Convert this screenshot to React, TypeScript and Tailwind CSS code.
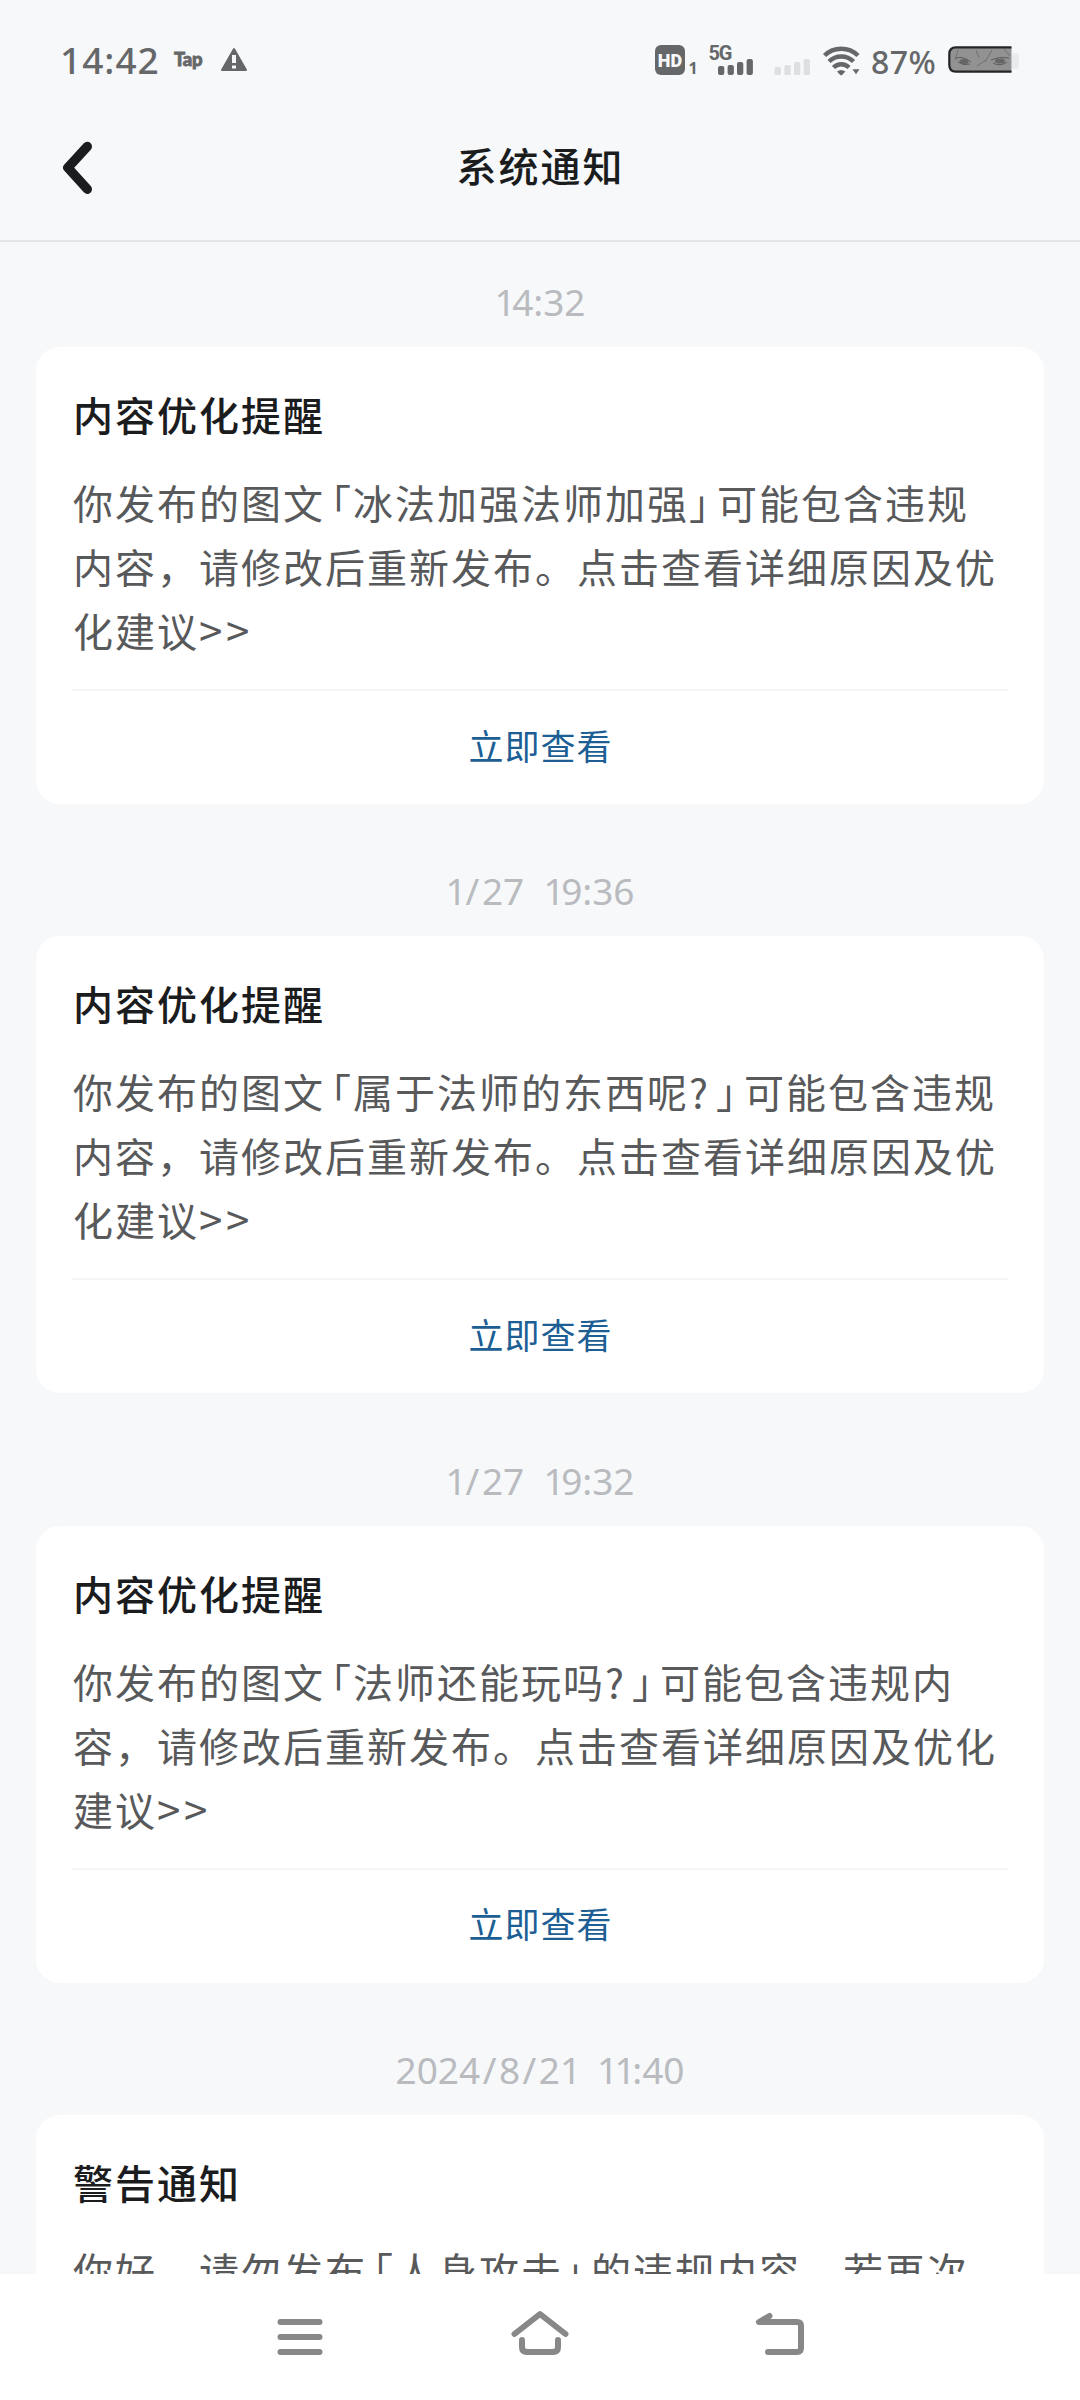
import type { ReactNode } from "react";

type Notice = {
  time: string;
  title: string;
  lines: string[];
  action?: string;
};

const notices: Notice[] = [
  {
    time: "14:32",
    title: "内容优化提醒",
    lines: [
      "你发布的图文「冰法加强法师加强」可能包含违规",
      "内容，请修改后重新发布。点击查看详细原因及优",
      "化建议>>",
    ],
    action: "立即查看",
  },
  {
    time: "1/27  19:36",
    title: "内容优化提醒",
    lines: [
      "你发布的图文「属于法师的东西呢?」可能包含违规",
      "内容，请修改后重新发布。点击查看详细原因及优",
      "化建议>>",
    ],
    action: "立即查看",
  },
  {
    time: "1/27  19:32",
    title: "内容优化提醒",
    lines: [
      "你发布的图文「法师还能玩吗?」可能包含违规内",
      "容，请修改后重新发布。点击查看详细原因及优化",
      "建议>>",
    ],
    action: "立即查看",
  },
  {
    time: "2024/8/21  11:40",
    title: "警告通知",
    lines: ["你好，请勿发布「人身攻击」的违规内容，若再次"],
  },
];

// Corner brackets and latin marks are set narrower than a full-width cell
const markClasses: Record<string, string> = {
  "「": "ml-[6px] [font-feature-settings:'halt']",
  "」": "mr-[6px] [font-feature-settings:'halt']",
  "?": "inline-block w-[27px]",
  ">": "inline-block w-[27px] text-[42px] leading-none",
};

function renderLine(line: string): ReactNode[] {
  return line.split(/([「」?>])/).map((part, i) =>
    markClasses[part] ? (
      <span key={i} className={markClasses[part]}>
        {part}
      </span>
    ) : (
      part
    ),
  );
}

function renderTime(time: string): ReactNode[] {
  return time.split(/([/1])/).map((part, i) => {
    if (part === "/") {
      return (
        <span key={i} className="px-[2.5px]">
          {part}
        </span>
      );
    }
    if (part === "1") {
      return (
        <span key={i} className="tracking-[-3.5px]">
          {part}
        </span>
      );
    }
    return part;
  });
}

function StatusBar() {
  return (
    <div className="flex h-[95px] shrink-0 items-start justify-between pl-[60px] pr-[60px] text-[#666769]">
      <div className="flex items-start">
        <span className="mt-[40px] w-[98px] font-['Noto_Sans'] text-[37px] font-medium leading-[40px] tracking-[1px]">
          14:42
        </span>
        <span className="ml-[16px] mt-[48px] w-[32px] font-['Lato'] text-[18.5px] font-black leading-[22px] tracking-[-0.3px] [-webkit-text-stroke:0.8px_currentColor]">
          Tap
        </span>
        <svg className="ml-[14px] mt-[47px]" width="28" height="25" viewBox="220 47 28 25">
          <path d="M234 49 L246 70 H222 Z" fill="currentColor" stroke="currentColor" strokeWidth="2" strokeLinejoin="round" />
          <path d="M232 55h4v8h-4zM232 65.5h4v3h-4z" fill="#f6f8fa" />
        </svg>
      </div>
      <div className="flex items-start">
        <svg className="mt-[40px]" width="210" height="40" viewBox="655 40 210 40" fill="currentColor">
          <rect x="655" y="45" width="30" height="30" rx="6" />
          <text x="670" y="66.7" textAnchor="middle" fill="#f6f8fa" className="font-['Roboto'] text-[18px] font-black">
            HD
          </text>
          <text x="688.5" y="74" className="font-['Noto_Sans'] text-[16px] font-bold">
            1
          </text>
          <text x="708.5" y="59.5" textLength="24" className="font-['Roboto'] text-[20px] font-bold">
            5G
          </text>
          <g>
            <rect x="718" y="66" width="6.3" height="9" rx="2" />
            <rect x="727.6" y="65" width="6.3" height="10" rx="2" />
            <rect x="737" y="62" width="6.3" height="13" rx="2" />
            <rect x="746.6" y="59" width="6.3" height="16" rx="2" />
          </g>
          <g fill="#dddfe1">
            <rect x="774.6" y="67" width="6.3" height="8" rx="1.5" />
            <rect x="784.4" y="65" width="6.3" height="10" rx="1.5" />
            <rect x="794" y="62" width="6.3" height="13" rx="1.5" />
            <rect x="803.6" y="59" width="6.3" height="16" rx="1.5" />
          </g>
          <g fill="none" stroke="currentColor" strokeWidth="4.4">
            <path d="M824.5 55.5 A24 24 0 0 1 858 55.5" />
            <path d="M829 61.5 A17.5 17.5 0 0 1 853.5 61.5" />
            <path d="M833.5 67.5 A11 11 0 0 1 849 67.5" />
          </g>
          <path d="M837 71.5 Q841.2 68.5 845.4 71.5 L842.3 74.8 Q841.2 75.8 840 74.8 Z" />
          <path d="M852.5 69.2h7l-3.5 5z" />
        </svg>
        <span className="ml-[6px] mt-[42px] w-[68px] font-['Noto_Sans'] text-[32px] font-medium leading-[40px] tracking-[0.4px]">
          87%
        </span>
        <svg className="ml-[9px] mt-[44px]" width="72" height="31" viewBox="948 44 72 31">
          <rect x="1012" y="53" width="7" height="16" rx="3" fill="#e9ebed" />
          <path d="M1011.5 47.3 H955 Q949.3 47.3 949.3 53 V66 Q949.3 71.7 955 71.7 H1011.5 Z" fill="#929292" />
          <path d="M1011.5 47.3 H956 Q949.3 47.3 949.3 54 V65 Q949.3 71.7 956 71.7 H1011.5" fill="none" stroke="#252528" strokeWidth="2.2" />
          <g fill="none" stroke="#5a5a5a" strokeWidth="1">
            <path d="M956 58 Q963 56 971 62 M958 62 Q963 66 970 64 M991 60 Q999 56 1009 58 M993 63 Q1000 67 1007 62" />
            <path d="M976 50 L979 58 M986 60 L977 66 M992 50 L985 62 M958 50 L955 60 M1004 49 L1010 56" strokeWidth="0.6" />
          </g>
          <ellipse cx="964" cy="61.5" rx="4.5" ry="2.6" fill="#666" />
          <ellipse cx="1000" cy="61" rx="5" ry="2.6" fill="#666" />
        </svg>
      </div>
    </div>
  );
}

function Header() {
  return (
    <header className="flex h-[147px] shrink-0 items-center border-b-2 border-[#e3e5e7] px-[60px] text-[#1b1c1e]">
      <svg width="36" height="56" viewBox="60 140 36 56" fill="none">
        <path d="M87.3 146.5 L67.8 167.7 L87.3 189.2" stroke="currentColor" strokeWidth="9.4" strokeLinecap="round" strokeLinejoin="round" />
      </svg>
      <h1 className="flex-1 pb-[5px] pr-[35px] text-center text-[40px] font-medium tracking-[2px]">系统通知</h1>
    </header>
  );
}

function NoticeItem({ notice }: { notice: Notice }) {
  return (
    <section className="shrink-0">
      <time className="mb-[20px] block h-[51px] whitespace-pre text-center font-['Noto_Sans'] text-[37px] leading-[51px] text-[#b9bbbf]">
        {renderTime(notice.time)}
      </time>
      <div className="rounded-3xl bg-white px-9 pt-[39px]">
        <h2 className="pl-px text-[40px] font-medium leading-[56px] tracking-[2px] text-[#1b1c1e]">{notice.title}</h2>
        <div className="mt-[28px] pl-px text-[40px] leading-[64px] tracking-[2px] text-[#58595b]">
          {notice.lines.map((line) => (
            <p key={line} className="h-[64px] whitespace-nowrap">
              {renderLine(line)}
            </p>
          ))}
        </div>
        {notice.action && (
          <button className="mt-[27px] block h-[115px] w-full border-t-2 border-[#f4f5f6] pb-[5px] pl-px text-center text-[35px] tracking-[1px] text-[#1d5f94]">
            {notice.action}
          </button>
        )}
      </div>
    </section>
  );
}

function NavBar() {
  return (
    <nav className="flex h-[126px] shrink-0 items-start justify-center gap-[180px] bg-white pt-[33px] text-[#888]">
      <svg width="60" height="56" viewBox="270 2307 60 56" fill="none" stroke="currentColor" strokeWidth="6" strokeLinecap="round">
        <path d="M280.5 2322h39M280.5 2337h39M280.5 2352h39" />
      </svg>
      <svg width="60" height="56" viewBox="510 2307 60 56" fill="none" stroke="currentColor" strokeWidth="6" strokeLinecap="round" strokeLinejoin="round">
        <path d="M514.5 2334 L540 2314 L565.5 2334" />
        <path d="M522 2340 V2347 Q522 2352 527 2352 H553 Q558 2352 558 2347 V2340" />
      </svg>
      <svg width="60" height="56" viewBox="750 2307 60 56" fill="none" stroke="currentColor" strokeWidth="6" strokeLinecap="round" strokeLinejoin="round">
        <path d="M769.5 2316 L759 2322 H797 Q801 2322 801 2326 V2348 Q801 2352 797 2352 H768" />
      </svg>
    </nav>
  );
}

export default function App() {
  return (
    <div className="flex h-[2400px] w-[1080px] flex-col overflow-hidden bg-[#f6f8fa] font-['Noto_Sans_CJK_SC',sans-serif]">
      <StatusBar />
      <Header />
      <main className="flex h-[2032px] shrink-0 flex-col gap-[61.3px] overflow-hidden px-9 pt-[34px]">
        {notices.map((notice) => (
          <NoticeItem key={notice.time} notice={notice} />
        ))}
      </main>
      <NavBar />
    </div>
  );
}
